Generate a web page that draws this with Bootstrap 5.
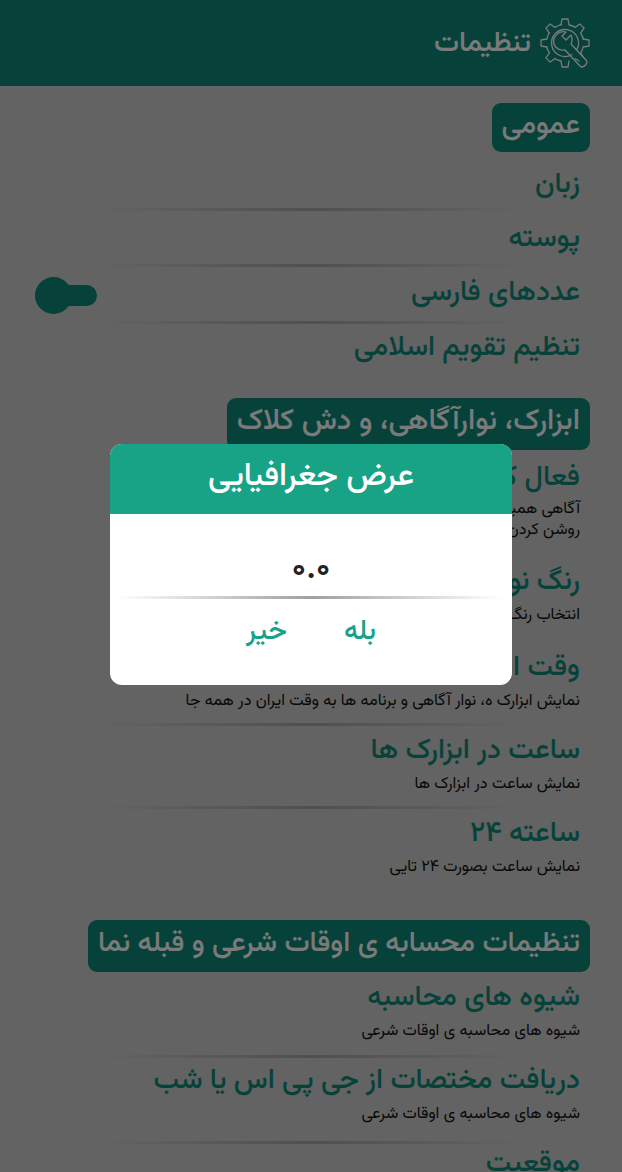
<!DOCTYPE html>
<html lang="fa" dir="rtl">
<head>
<meta charset="utf-8">
<link rel="stylesheet" href="https://cdn.jsdelivr.net/npm/bootstrap@5.3.0/dist/css/bootstrap.min.css">
<style>
html,body{height:1172px;overflow:hidden;}
body{background:#c4c6c5;font-family:"Vazirmatn","DejaVu Sans",sans-serif;color:#111;position:relative;}
.top-strip{height:86px;background:#0e8474;padding-right:32px;gap:9px;}
.top-strip h1{font-size:28.2px;font-weight:500;margin:3px 0 0;color:#f4f4f4;}
.sect{padding:0 32px;}
.sect-one{padding-top:17px;}
.sect-two{padding-top:33px;}
.sect-three{padding-top:42px;}
.tag-wrap{display:flex;}
.sect-tag{background:#0e8474;color:#f4f4f4;font-size:28.4px;font-weight:500;border-radius:9px;padding:0 10px;height:52px;line-height:48px;white-space:nowrap;}
.sect-tag.low{height:49px;line-height:46px;}
.sect-tag.broad{font-size:29.5px;}
.opt{padding:8px 10px 11px 3px;}
.opt-title{font-size:28.4px;font-weight:500;color:#0e8474;line-height:34px;white-space:nowrap;}
.opt-desc{font-size:16.2px;line-height:21px;color:#111;white-space:nowrap;margin-top:6px;}
.fade-line{height:3px;background:linear-gradient(to left,transparent,#a0a0a0 50%,transparent);margin:0 70px;}
.toggle-track{position:relative;width:62px;height:21px;border-radius:11px;background:#0e8474;margin-top:4px;}
.toggle-knob{position:absolute;left:0;top:-8px;width:37px;height:37px;border-radius:50%;background:#0e8474;}
.r-zaban{padding-top:16px;padding-bottom:6px;}
.r-pooste{padding-top:11px;padding-bottom:8px;}
.r-adad{padding-top:9px;padding-bottom:11px;}
.r-taghvim{padding-top:7px;padding-bottom:0;}
.r-faal{padding-top:11px;padding-bottom:13px;}
.r-faal .opt-desc{margin-top:4px;}
.r-rang{padding-bottom:14px;}
.r-end{padding-bottom:0;}
.r-shive{padding-top:9px;padding-bottom:13px;}
.r-gps{padding-top:6px;padding-bottom:16px;}
.r-mogh{padding-top:3px;padding-bottom:0;}
.scrim{position:absolute;inset:0;background:rgba(0,0,0,.5);}
.geo-box{position:absolute;left:110px;top:444px;width:402px;height:241px;background:#fff;border-radius:12px;overflow:hidden;}
.geo-head{height:70px;background:#19a386;color:#fff;font-size:32.3px;font-weight:500;padding-bottom:4px;}
.geo-val{height:82px;font-size:34px;font-weight:500;color:#222;padding-top:34px;line-height:44px;}
.geo-btns{gap:57px;padding-top:12px;padding-left:0;}
.geo-btns span{font-size:28px;font-weight:500;color:#19a386;}
.modal-line{margin:0 8px;}
</style>
</head>
<body>
<header class="top-strip d-flex align-items-center">
<svg width="50" height="50" viewBox="-25 -25 50 50" fill="none" stroke="#f4f4f4" stroke-width="1.3" stroke-linejoin="round" stroke-linecap="round">
<defs><path id="cog-seg" d="M-4 -18 L-3 -24 H3 L4 -18 A18.4 18.4 0 0 1 10.2 -15.8"/></defs>
<use href="#cog-seg"/>
<use href="#cog-seg" transform="rotate(45)"/>
<use href="#cog-seg" transform="rotate(90)"/>
<use href="#cog-seg" transform="rotate(180)"/>
<use href="#cog-seg" transform="rotate(225)"/>
<use href="#cog-seg" transform="rotate(270)"/>
<use href="#cog-seg" transform="rotate(315)"/>
<path d="M15.8 10.2 L18 14 M10.2 15.8 L14 18"/>
<path d="M6.8 11.7 A13.5 13.5 0 1 1 11.7 6.8"/>
<path d="M1 -11 C-6 -13 -13 -6 -11 1 C-10 5 -5 8 0 7 L15 23 C18 26 24 20 21 17 L6 1 C8 -3 7 -6 6 -8 L1 -3 L-3 -7 Z"/>
</svg>
<h1>تنظیمات</h1>
</header>
<section class="sect sect-one">
<div class="tag-wrap"><div class="sect-tag low">عمومی</div></div>
<div class="opt r-zaban"><div class="opt-title">زبان</div></div><div class="fade-line"></div>
<div class="opt r-pooste"><div class="opt-title">پوسته</div></div><div class="fade-line"></div>
<div class="opt r-adad d-flex justify-content-between align-items-center"><div class="opt-title">عددهای فارسی</div><div class="toggle-track"><div class="toggle-knob"></div></div></div><div class="fade-line"></div>
<div class="opt r-taghvim"><div class="opt-title">تنظیم تقویم اسلامی</div></div>
</section>
<section class="sect sect-two">
<div class="tag-wrap"><div class="sect-tag broad">ابزارک، نوارآگاهی، و دش کلاک</div></div>
<div class="opt r-faal"><div class="opt-title">فعال کردن نوار آگاهی</div><div class="opt-desc">آگاهی همیشه فعال برای نمایش تاریخ و ساعت<br>روشن کردن نوار آگاهی</div></div><div class="fade-line"></div>
<div class="opt r-rang"><div class="opt-title">رنگ نوار آگاهی</div><div class="opt-desc">انتخاب رنگ نوار آگاهی</div></div><div class="fade-line"></div>
<div class="opt"><div class="opt-title">وقت ایران</div><div class="opt-desc">نمایش ابزارک ه، نوار آگاهی و برنامه ها به وقت ایران در همه جا</div></div><div class="fade-line"></div>
<div class="opt"><div class="opt-title">ساعت در ابزارک ها</div><div class="opt-desc">نمایش ساعت در ابزارک ها</div></div><div class="fade-line"></div>
<div class="opt r-end"><div class="opt-title">ساعته ۲۴</div><div class="opt-desc">نمایش ساعت بصورت ۲۴ تایی</div></div>
</section>
<section class="sect sect-three">
<div class="tag-wrap"><div class="sect-tag">تنظیمات محسابه ی اوقات شرعی و قبله نما</div></div>
<div class="opt r-shive"><div class="opt-title">شیوه های محاسبه</div><div class="opt-desc">شیوه های محاسبه ی اوقات شرعی</div></div><div class="fade-line"></div>
<div class="opt r-gps"><div class="opt-title">دریافت مختصات از جی پی اس یا شب</div><div class="opt-desc">شیوه های محاسبه ی اوقات شرعی</div></div><div class="fade-line"></div>
<div class="opt r-mogh"><div class="opt-title">موقعیت</div></div>
</section>
<div class="scrim"></div>
<div class="geo-box">
<div class="geo-head d-flex align-items-center justify-content-center">عرض جغرافیایی</div>
<div class="geo-val text-center">۰.۰</div>
<div class="fade-line modal-line"></div>
<div class="geo-btns d-flex justify-content-center"><span>بله</span><span>خیر</span></div>
</div>
</body>
</html>
